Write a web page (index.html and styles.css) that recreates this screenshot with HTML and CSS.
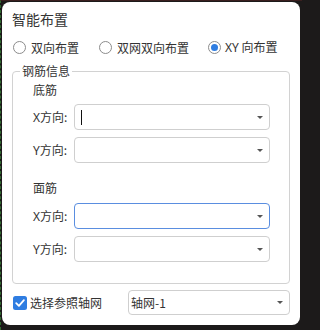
FILE: index.html
```html
<!DOCTYPE html>
<html lang="zh">
<head>
<meta charset="utf-8">
<title>智能布置</title>
<link rel="stylesheet" href="styles.css">
</head>
<body>
<div class="panel">
  <div class="title">智能布置</div>
  <div class="radios">
    <label class="radio"><span class="circle"></span><span>双向布置</span></label>
    <label class="radio"><span class="circle"></span><span>双网双向布置</span></label>
    <label class="radio"><span class="circle on"><span class="dot"></span></span><span><span class="latin">XY</span> 向布置</span></label>
  </div>
  <fieldset class="group">
    <legend>钢筋信息</legend>
    <div class="section">底筋</div>
    <div class="row first">
      <span class="lbl"><span class="latin">X</span>方向:</span>
      <div class="combo"><span class="caret"></span><span class="arrow"></span></div>
    </div>
    <div class="row">
      <span class="lbl"><span class="latin">Y</span>方向:</span>
      <div class="combo"><span></span><span class="arrow"></span></div>
    </div>
    <div class="section second">面筋</div>
    <div class="row first">
      <span class="lbl"><span class="latin">X</span>方向:</span>
      <div class="combo focus"><span></span><span class="arrow"></span></div>
    </div>
    <div class="row">
      <span class="lbl"><span class="latin">Y</span>方向:</span>
      <div class="combo"><span></span><span class="arrow"></span></div>
    </div>
  </fieldset>
  <div class="footer">
    <label class="check">
      <svg class="box" width="14" height="14" viewBox="0 0 14 14"><rect x="0" y="0" width="14" height="14" rx="2.5" fill="#2f7de1"/><path d="M3.2 7.2 L5.9 9.8 L10.9 4.2" fill="none" stroke="#fff" stroke-width="1.8" stroke-linecap="round" stroke-linejoin="round"/></svg>
      <span>选择参照轴网</span>
    </label>
    <div class="combo select"><span>轴网-1</span><span class="arrow"></span></div>
  </div>
</div>
</body>
</html>
```
FILE: styles.css
```css
html {
  margin: 0;
  background: #1c1a1a;
}
body {
  margin: 0;
  box-sizing: border-box;
  width: 302px;
  height: 330px;
  overflow: hidden;
  padding: 1px 2px 0 1px;
  background: #1c1a1a;
  border-top: 1px solid #3a1f1f;
  border-left: 1px dashed #2f6b2f;
  font-family: "Noto Sans CJK SC", "Noto Sans", sans-serif;
  font-size: 12px;
  color: #333;
}
.latin {
  font-family: "Noto Sans", "Liberation Sans", sans-serif;
}
.panel {
  background: #fff;
  border-radius: 8px;
  padding: 7px 10px 10px 10px;
}
.title {
  font-size: 14px;
  line-height: 20px;
}
.radios {
  display: flex;
  align-items: center;
  height: 20px;
  margin-top: 8px;
}
.radio {
  display: flex;
  align-items: center;
  gap: 5px;
  margin-left: 1px;
}
.radio + .radio {
  margin-left: 20px;
}
.radio:last-child {
  margin-left: 19px;
  gap: 4px;
}
.circle {
  box-sizing: border-box;
  width: 13px;
  height: 13px;
  border: 1px solid #8c8c8c;
  border-radius: 50%;
  display: flex;
  align-items: center;
  justify-content: center;
}
.dot {
  width: 7px;
  height: 7px;
  border-radius: 50%;
  background: #2f7de1;
}
.group {
  margin: 5px 0 0;
  border: 1px solid #d2d2d2;
  border-radius: 4px;
  padding: 0 19px 21px 20px;
  min-width: 0;
}
.group legend {
  padding: 0 2px;
  margin-left: -13px;
  line-height: 18px;
}
.section {
  line-height: 20px;
}
.section.second {
  margin-top: 15px;
}
.row {
  display: flex;
  align-items: center;
  margin-top: 7px;
}
.row.first {
  margin-top: 4px;
}
.section.second + .row.first {
  margin-top: 5px;
}
.lbl {
  width: 41px;
  flex: none;
}
.combo {
  flex: 1;
  box-sizing: border-box;
  height: 26px;
  border: 1px solid #cfcfcf;
  border-radius: 4px;
  background: #fff;
  display: flex;
  align-items: center;
  justify-content: space-between;
  padding: 0 6px 0 6px;
}
.combo.focus {
  border-color: #5a8ee0;
}
.caret {
  width: 1px;
  height: 15px;
  background: #111;
}
.arrow {
  width: 0;
  height: 0;
  border-left: 3px solid transparent;
  border-right: 3px solid transparent;
  border-top: 3px solid #555;
}
.footer {
  display: flex;
  align-items: center;
  margin-top: 6px;
}
.check {
  display: flex;
  align-items: center;
  gap: 3px;
  margin-left: 1px;
}
.box {
  display: block;
}
.select {
  flex: none;
  width: 162px;
  height: 25px;
  margin-left: auto;
  padding: 0 6px 0 2px;
}
```
